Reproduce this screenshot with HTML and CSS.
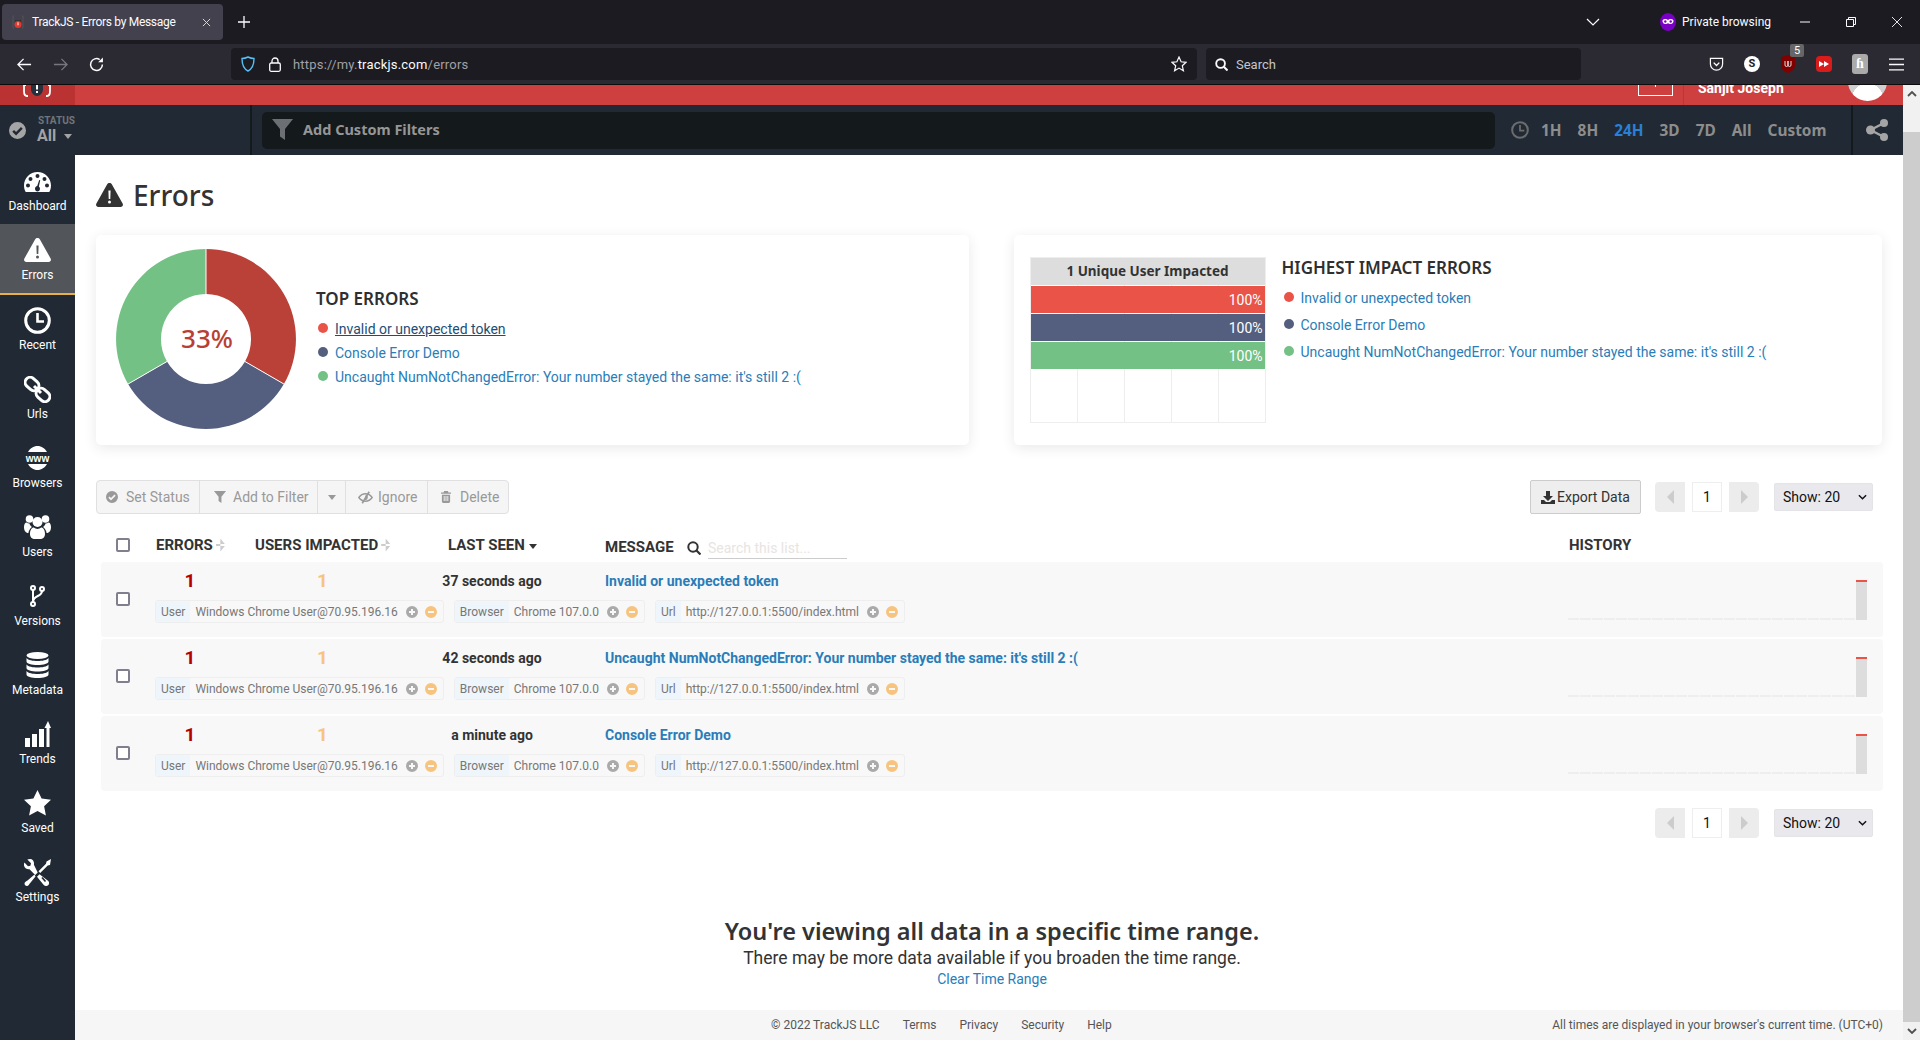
FILE: index.html
```html
<!DOCTYPE html>
<html lang="en">
<head>
<meta charset="utf-8">
<title>TrackJS - Errors by Message</title>
<link rel="stylesheet" href="styles.css">
</head>
<body>
<svg class="sprite" xmlns="http://www.w3.org/2000/svg">
  <symbol id="i-warn" viewBox="0 0 27 24"><path fill="currentColor" fill-rule="evenodd" d="M13.5 0c1 0 1.8.5 2.3 1.3l10.8 19.2c.9 1.6-.2 3.5-2 3.5H2.4c-1.8 0-2.9-1.9-2-3.5L11.2 1.300C11.700.5 12.500 0 13.500 0zM12.400 7.500l.3 8.500h1.600l.3-8.500zM13.500 17.500a1.500 1.500 0 1 0 0 3 1.500 1.500 0 0 0 0-3z"/></symbol>
  <symbol id="i-dash" viewBox="0 0 27 20"><path fill="currentColor" fill-rule="evenodd" d="M13.500 0C6 0 0 6 0 13.500c0 2.400.6 4.600 1.700 6.500h23.600c1.100-1.900 1.700-4.100 1.700-6.500C27 6 21 0 13.500 0zM13.500 2a2 2 0 1 1 0 4 2 2 0 0 1 0-4zM6.500 5a2 2 0 1 1 0 4 2 2 0 0 1 0-4zM20.500 5a2 2 0 1 1 0 4 2 2 0 0 1 0-4zM4 11.500a2 2 0 1 1 0 4 2 2 0 0 1 0-4zM23 11.500a2 2 0 1 1 0 4 2 2 0 0 1 0-4zM15.200 8l1 .3-1.300 6.200c.7.500 1.100 1.300 1.100 2.200 0 1.500-1.100 2.800-2.500 2.800S11 18.200 11 16.700c0-1.300 1-2.400 2.200-2.600z"/></symbol>
  <symbol id="i-clock" viewBox="0 0 27 27"><circle cx="13.500" cy="13.500" r="11.800" fill="none" stroke="currentColor" stroke-width="3"/><path d="M13.500 6v8.500h6.500" fill="none" stroke="currentColor" stroke-width="2.600"/></symbol>
  <symbol id="i-link" viewBox="0 0 27 27"><g fill="none" stroke="currentColor" stroke-width="3"><rect x="-7.500" y="-5" width="15" height="10" rx="5" transform="translate(8 8) rotate(42)"/><rect x="-7.500" y="-5" width="15" height="10" rx="5" transform="translate(19 19) rotate(42)"/></g><path d="M10 10l7 7" stroke="currentColor" stroke-width="3"/></symbol>
  <symbol id="i-www" viewBox="0 0 27 24"><path fill="currentColor" d="M4 6C6 2.500 9.500 0 13.500 0S21 2.500 23 6zM4 18h19c-2 3.500-5.500 6-9.500 6S6 21.500 4 18z"/><text x="13.500" y="15.500" text-anchor="middle" class="www">www</text></symbol>
  <symbol id="i-users" viewBox="0 0 27 24"><g fill="currentColor"><circle cx="13.500" cy="7" r="5"/><circle cx="5.500" cy="4" r="3.800"/><circle cx="21.500" cy="4" r="3.800"/><path d="M6 19c0-4 1.800-6.500 3.800-6.500 1 .9 2.300 1.400 3.700 1.400s2.700-.5 3.700-1.400c2 0 3.800 2.500 3.800 6.500 0 3-2 5-5 5h-5c-3 0-5-2-5-5z"/><path d="M0 12c0-2.500 1.200-4.500 2.500-4.500 .8.600 1.800 1 3 1 .4 1.700 1.300 2.700 2.400 3.500C6 13.500 4.700 15.500 4.400 18 1.500 18 0 15.500 0 12zM27 12c0-2.500-1.200-4.500-2.500-4.500-.8.600-1.800 1-3 1-.4 1.700-1.300 2.700-2.400 3.500 1.900 1.500 3.200 3.500 3.500 6 2.900 0 4.400-2.500 4.400-6z"/></g></symbol>
  <symbol id="i-fork" viewBox="0 0 15 22"><g fill="none" stroke="currentColor" stroke-width="2"><circle cx="3" cy="3" r="2"/><circle cx="3" cy="19" r="2"/><circle cx="12" cy="4" r="2"/><path d="M3 5v12M12 6c0 6-9 4-9 11"/></g></symbol>
  <symbol id="i-db" viewBox="0 0 23 30" preserveAspectRatio="none"><g fill="currentColor"><ellipse cx="11.500" cy="4" rx="11" ry="4"/><path d="M.5 7C2 9.500 7 10.500 11.500 10.500S21 9.500 22.500 7v4c0 2.300-5 4-11 4S.5 13.300.5 11z"/><path d="M.5 14.500C2 17 7 18 11.500 18s9.500-1 11-3.500v4c0 2.300-5 4-11 4s-11-1.700-11-4z"/><path d="M.5 22C2 24.500 7 25.500 11.500 25.500s9.500-1 11-3.500v4c0 2.300-5 4-11 4s-11-1.700-11-4z"/></g></symbol>
  <symbol id="i-trend" viewBox="0 0 26 26"><g fill="currentColor"><rect x="0" y="17" width="5" height="9"/><rect x="7" y="13" width="5" height="13"/><rect x="14" y="8" width="5" height="18"/><path d="M19.500 7L23 0l3 7h-1.500v19h-3V7z"/></g></symbol>
  <symbol id="i-star" viewBox="0 0 27 26"><polygon fill="currentColor" points="13.500,0 17.600,8.600 27,9.800 20.100,16.300 21.900,25.600 13.500,21 5.100,25.600 6.900,16.300 0,9.800 9.400,8.600"/></symbol>
  <symbol id="i-tools" viewBox="0 0 27 27"><g fill="currentColor"><path d="M6 0C5 0 4 .2 3.300.6L7 4.300 6.400 6.700 4 7.300.4 3.600C0 4.500-.1 5.500 0 6.500.4 9 2.800 10.700 5.500 10.300l5.700 5.700 2.500-2.500L9.900 5.700C10.500 2.800 8.800 0 6 0z"/><path d="M27 0l-4.500 2.500-.5 2.300-7.500 7.500 1.700 1.700 7.500-7.500 2.300-.5zM10.500 15.500L3.500 21.500c-1 .8-3 1.500-3 3 0 1.500 1 2.500 2.500 2.500s2.200-1.800 3-2.800l5.500-6.700z"/><path d="M15.500 15.200l-2.500 2.500 6.300 7.800c1 1.500 3 2 4.500 1s1.700-3.200.5-4.500z"/></g><path d="M18 18.500l3.500 4" stroke="#212a34" stroke-width="1.600"/></symbol>
  <symbol id="i-check" viewBox="0 0 18 18"><path fill="currentColor" fill-rule="evenodd" d="M9 0a9 9 0 1 1 0 18A9 9 0 0 1 9 0zM7.500 14.200l7-7-1.800-1.800-5.200 5.200-2.200-2.200-1.800 1.800z"/></symbol>
  <symbol id="i-funnel" viewBox="0 0 21 21"><path fill="currentColor" d="M0 0h21l-8 10v11l-5-3.500V10z"/></symbol>
  <symbol id="i-share" viewBox="0 0 22 22"><g fill="currentColor"><circle cx="18" cy="4" r="4"/><circle cx="4.500" cy="11" r="4.500"/><circle cx="18" cy="18" r="4"/></g><path d="M18 4L4.500 11 18 18" fill="none" stroke="currentColor" stroke-width="2.400"/></symbol>
  <symbol id="i-eye" viewBox="0 0 16 14"><path fill="none" stroke="currentColor" stroke-width="1.500" d="M.8 7C3 4 5.500 3 8 3s5 1 7.200 4C13 10 10.500 11 8 11S3 10 .8 7z"/><path fill="currentColor" d="M8 4.500a2.500 2.500 0 1 1-1 4.800z"/><path stroke="currentColor" stroke-width="1.800" d="M12 .8L4.500 13.200"/></symbol>
  <symbol id="i-trash" viewBox="0 0 11 13"><path fill="currentColor" fill-rule="evenodd" d="M3.500 0h4l.7 1.500H11V3H0V1.500h2.800zM1 4h9v7.500c0 .8-.7 1.500-1.500 1.500h-6C1.700 13 1 12.300 1 11.500zM3 5.500V11h1V5.500zM5 5.500V11h1V5.500zM7 5.500V11h1V5.500z"/></symbol>
  <symbol id="i-search" viewBox="0 0 14 14"><circle cx="6" cy="6" r="4.700" fill="none" stroke="currentColor" stroke-width="2"/><path d="M9.500 9.500L13.500 13.500" stroke="currentColor" stroke-width="2.200"/></symbol>
  <symbol id="i-down" viewBox="0 0 14 13"><path fill="currentColor" d="M5 0h4v5h3L7 10 2 5h3zM0 9h3l2 2h4l2-2h3v4H0z"/></symbol>
  <symbol id="i-plus" viewBox="0 0 12 12"><path fill="currentColor" fill-rule="evenodd" d="M6 0a6 6 0 1 1 0 12A6 6 0 0 1 6 0zM5 3v2H3v2h2v2h2V7h2V5H7V3z"/></symbol>
  <symbol id="i-minus" viewBox="0 0 12 12"><path fill="currentColor" fill-rule="evenodd" d="M6 0a6 6 0 1 1 0 12A6 6 0 0 1 6 0zM3 5v2h6V5z"/></symbol>
  <symbol id="i-chev" viewBox="0 0 10 6"><path d="M1 1l4 4 4-4" fill="none" stroke="currentColor" stroke-width="1.600"/></symbol>
</svg>

<header class="browser">
  <div class="tabstrip">
    <div class="tab">
      <svg class="favicon" viewBox="0 0 12 14"><path d="M2 1H1v12h1M10 1h1v12h-1" fill="none" stroke="#555" stroke-width="1"/><path d="M3 5h6v4H3z" fill="#333"/><circle cx="6" cy="9.500" r="3.500" fill="#e03a2e"/><rect x="5.500" y="7.300" width="1" height="3" fill="#fff"/></svg>
      <span class="tab-title">TrackJS - Errors by Message</span>
      <svg class="tab-x" viewBox="0 0 10 10"><path d="M1 1l8 8M9 1l-8 8" stroke="#d8d8da" stroke-width="1.100"/></svg>
    </div>
    <svg class="newtab" viewBox="0 0 12 12"><path d="M6 0v12M0 6h12" stroke="#fbfbfe" stroke-width="1.300"/></svg>
    <svg class="tab-list" viewBox="0 0 14 8"><path d="M1 1l6 6 6-6" fill="none" stroke="#fbfbfe" stroke-width="1.200"/></svg>
    <svg class="private-icon" viewBox="0 0 16 18"><ellipse cx="8" cy="9" rx="8" ry="9" fill="#7b00c6"/><path d="M2.500 8c0-1.500 1.500-2 3-2 1 0 2 .5 2.500 1 .5-.5 1.500-1 2.500-1 1.500 0 3 .5 3 2s-1 3-2.700 3c-1.300 0-2-.8-2.800-.8s-1.500.8-2.800.8C3.500 11 2.500 9.500 2.500 8z" fill="#fff"/><circle cx="5.300" cy="8.500" r="1.200" fill="#7b00c6"/><circle cx="10.700" cy="8.500" r="1.200" fill="#7b00c6"/></svg>
    <span class="private-label">Private browsing</span>
    <div class="winbtn"><svg viewBox="0 0 10 10"><path d="M0 5h10" stroke="#fbfbfe"/></svg></div>
    <div class="winbtn"><svg viewBox="0 0 10 10"><path d="M.5 2.500h7v7h-7zM2.500 2.500v-2h7v7h-2" fill="none" stroke="#fbfbfe"/></svg></div>
    <div class="winbtn"><svg viewBox="0 0 10 10"><path d="M0 0l10 10M10 0L0 10" stroke="#fbfbfe" stroke-width=".9"/></svg></div>
  </div>
  <div class="navbar">
    <div class="navbtn"><svg viewBox="0 0 16 14"><path d="M7 1L1 7l6 6M1 7h14" fill="none" stroke="#fbfbfe" stroke-width="1.400"/></svg></div>
    <div class="navbtn"><svg viewBox="0 0 16 14"><path d="M9 1l6 6-6 6M15 7H1" fill="none" stroke="#77767d" stroke-width="1.400"/></svg></div>
    <div class="navbtn"><svg viewBox="0 0 14 14"><path d="M12.500 7A5.500 5.500 0 1 1 10 2.400" fill="none" stroke="#fbfbfe" stroke-width="1.400"/><path d="M13 .5v4.500H8.500z" fill="#fbfbfe"/></svg></div>
    <div class="urlbar">
      <svg class="shield" viewBox="0 0 14 16"><path d="M7 1c2 1 3.500 1.500 6 1.500C13 9 11 13 7 15 3 13 1 9 1 2.500 3.500 2.500 5 2 7 1z" fill="none" stroke="#54c0f5" stroke-width="1.400"/></svg>
      <svg class="lock" viewBox="0 0 12 15"><path d="M3 6V4a3 3 0 0 1 6 0v2" fill="none" stroke="#fbfbfe" stroke-width="1.300"/><rect x=".7" y="6" width="10.600" height="8.300" rx="1.500" fill="none" stroke="#fbfbfe" stroke-width="1.300"/></svg>
      <span class="url">https://my.<b>trackjs.com</b>/errors</span>
      <svg class="bookmark" viewBox="0 0 16 16"><polygon points="8,1 10.100,5.800 15,6.300 11.300,9.700 12.400,14.700 8,12.100 3.600,14.700 4.700,9.700 1,6.300 5.900,5.800" fill="none" stroke="#fbfbfe" stroke-width="1.200"/></svg>
    </div>
    <div class="searchbar">
      <svg class="sb-icon"><use href="#i-search"/></svg>
      <span>Search</span>
    </div>
    <div class="ext-row">
      <div class="navbtn"><svg viewBox="0 0 16 16"><path d="M1.500 1.500h13v6a6.500 6.500 0 0 1-13 0z" fill="none" stroke="#fbfbfe" stroke-width="1.300"/><path d="M5 6l3 3 3-3" fill="none" stroke="#fbfbfe" stroke-width="1.500"/></svg></div>
      <div class="navbtn"><span class="ext-s">S</span></div>
      <div class="navbtn ext-ub"><svg viewBox="0 0 14 18"><path d="M7 0l7 2v8c0 4-3 6.500-7 8-4-1.500-7-4-7-8V2z" fill="#800000"/><path d="M4 6v4a1.500 1.500 0 0 0 3 0V6M7 6v4a1.500 1.500 0 0 0 3 0V6" fill="none" stroke="#ddd" stroke-width="1"/></svg><span class="badge">5</span></div>
      <div class="navbtn"><span class="ext-red"><svg viewBox="0 0 10 6"><path d="M0 0l5 3-5 3zM5 0l5 3-5 3z" fill="#fff"/></svg></span></div>
      <div class="navbtn"><span class="ext-h">ɦ</span></div>
      <div class="navbtn"><svg viewBox="0 0 14 12"><path d="M0 1h14M0 6h14M0 11h14" stroke="#fbfbfe" stroke-width="1.300"/></svg></div>
    </div>
  </div>
</header>

<div class="viewport">
  <div class="page">
    <div class="redbar">
      <div class="logo">
        <svg viewBox="0 0 30 12"><path d="M4 0L2 .0V6c0 3 1 5 3 5h1M26 0h2v6c0 3-1 5-3 5h-1" fill="none" stroke="#fff" stroke-width="1.800"/><path d="M9 0h12v4c0 4-3 7-6 7s-6-3-6-7z" fill="#27303c"/><rect x="14" y="0" width="2" height="4.500" fill="#fff"/><rect x="14" y="6" width="2" height="2" fill="#fff"/></svg>
      </div>
      <div class="notif"><i></i></div>
      <div class="user-sep"></div>
      <div class="user-name">Sanjit Joseph</div>
      <div class="avatar"></div>
    </div>
    <div class="subbar">
      <div class="status">
        <svg class="status-icon"><use href="#i-check"/></svg>
        <div class="status-text">
          <span class="status-label">STATUS</span>
          <span class="status-value">All <i class="caret"></i></span>
        </div>
      </div>
      <div class="filterbox">
        <svg class="filter-icon"><use href="#i-funnel"/></svg>
        <span>Add Custom Filters</span>
      </div>
      <svg class="range-clock"><use href="#i-clock"/></svg>
      <nav class="ranges">
        <span>1H</span><span>8H</span><span class="on">24H</span><span>3D</span><span>7D</span><span>All</span><span>Custom</span>
      </nav>
      <div class="sharebox"><svg><use href="#i-share"/></svg></div>
    </div>
    <div class="content">
      <aside class="sidebar">
        <a class="nav"><svg class="ico w27 h20"><use href="#i-dash"/></svg>Dashboard</a>
        <a class="nav active"><svg class="ico w27 h24"><use href="#i-warn"/></svg>Errors</a>
        <a class="nav"><svg class="ico w27 h27"><use href="#i-clock"/></svg>Recent</a>
        <a class="nav"><svg class="ico w27 h27"><use href="#i-link"/></svg>Urls</a>
        <a class="nav"><svg class="ico w27 h24"><use href="#i-www"/></svg>Browsers</a>
        <a class="nav"><svg class="ico w27 h24"><use href="#i-users"/></svg>Users</a>
        <a class="nav"><svg class="ico w15 h22"><use href="#i-fork"/></svg>Versions</a>
        <a class="nav"><svg class="ico w23 h26"><use href="#i-db"/></svg>Metadata</a>
        <a class="nav"><svg class="ico w26 h26"><use href="#i-trend"/></svg>Trends</a>
        <a class="nav"><svg class="ico w27 h26"><use href="#i-star"/></svg>Saved</a>
        <a class="nav"><svg class="ico w27 h27"><use href="#i-tools"/></svg>Settings</a>
      </aside>
      <main class="main">
        <div class="inner">
          <h1 class="title"><svg><use href="#i-warn"/></svg>Errors</h1>
          <section class="cards">
            <div class="card card-top">
              <svg class="donut" viewBox="0 0 180 180">
                <path fill="#b94137" d="M90 0A90 90 0 0 1 167.900 135L129 112.500A45 45 0 0 0 90 45z"/>
                <path fill="#545f7f" d="M167.900 135A90 90 0 0 1 12.100 135L51 112.500A45 45 0 0 0 129 112.500z"/>
                <path fill="#74c186" d="M12.100 135A90 90 0 0 1 90 0V45A45 45 0 0 0 51 112.500z"/>
                <path d="M90 0V45M167.900 135L129 112.500M12.100 135L51 112.500" stroke="#fff" stroke-width="1"/>
                <text x="91" y="99" text-anchor="middle" class="donut-label">33%</text>
              </svg>
              <div class="legend legend-top">
                <h2>TOP ERRORS</h2>
                <div class="leg"><i class="dot red"></i><a class="hover">Invalid or unexpected token</a></div>
                <div class="leg"><i class="dot navy"></i><a>Console Error Demo</a></div>
                <div class="leg"><i class="dot green"></i><a>Uncaught NumNotChangedError: Your number stayed the same: it's still 2 :(</a></div>
              </div>
            </div>
            <div class="card card-impact">
              <div class="chart">
                <div class="chart-head">1 Unique User Impacted</div>
                <div class="chart-body">
                  <div class="bar red">100%</div>
                  <div class="bar navy">100%</div>
                  <div class="bar green">100%</div>
                </div>
              </div>
              <div class="legend legend-impact">
                <h2>HIGHEST IMPACT ERRORS</h2>
                <div class="leg"><i class="dot red"></i><a>Invalid or unexpected token</a></div>
                <div class="leg"><i class="dot navy"></i><a>Console Error Demo</a></div>
                <div class="leg"><i class="dot green"></i><a>Uncaught NumNotChangedError: Your number stayed the same: it's still 2 :(</a></div>
              </div>
            </div>
          </section>

          <div class="toolbar">
            <div class="btn-group">
              <span class="seg s1"><svg><use href="#i-check"/></svg>Set Status</span>
              <span class="seg s2"><svg><use href="#i-funnel"/></svg>Add to Filter</span>
              <span class="seg s3"><i class="caret"></i></span>
              <span class="seg s4"><svg><use href="#i-eye"/></svg>Ignore</span>
              <span class="seg s5"><svg><use href="#i-trash"/></svg>Delete</span>
            </div>
            <div class="tools-right">
              <span class="export"><svg><use href="#i-down"/></svg>Export Data</span>
              <div class="pager">
                <span class="pg prev"><i></i></span><span class="pg num">1</span><span class="pg next"><i></i></span>
              </div>
              <span class="show">Show: 20<svg><use href="#i-chev"/></svg></span>
            </div>
          </div>

          <div class="thead">
            <span class="cb"></span>
            <span class="th th-err">ERRORS<i class="sort"></i></span>
            <span class="th th-usr">USERS IMPACTED<i class="sort"></i></span>
            <span class="th th-seen">LAST SEEN<i class="caret dark"></i></span>
            <span class="th th-msg">MESSAGE</span>
            <svg class="th-search"><use href="#i-search"/></svg>
            <span class="th-input">Search this list...</span>
            <span class="th th-hist">HISTORY</span>
          </div>

          <div class="rows">
            <article class="row">
              <span class="cb"></span>
              <div class="row-main">
                <div class="row-top">
                  <span class="n-err">1</span><span class="n-usr">1</span><span class="seen">37 seconds ago</span><a class="msg">Invalid or unexpected token</a>
                </div>
                <div class="tags">
                  <div class="tag"><b>User</b><span>Windows Chrome User@70.95.196.16</span><svg class="p"><use href="#i-plus"/></svg><svg class="m"><use href="#i-minus"/></svg></div>
                  <div class="tag"><b>Browser</b><span>Chrome 107.0.0</span><svg class="p"><use href="#i-plus"/></svg><svg class="m"><use href="#i-minus"/></svg></div>
                  <div class="tag"><b>Url</b><span>http://127.0.0.1:5500/index.html</span><svg class="p"><use href="#i-plus"/></svg><svg class="m"><use href="#i-minus"/></svg></div>
                </div>
              </div>
              <svg class="spark" viewBox="0 0 299 40"><path d="M0 39H287" stroke="#e4e4e4" stroke-dasharray="11 1"/><rect x="288" y="0" width="11" height="40" fill="#ddd"/><rect x="288" y="0" width="11" height="2" fill="#ea5448"/></svg>
            </article>
            <article class="row">
              <span class="cb"></span>
              <div class="row-main">
                <div class="row-top">
                  <span class="n-err">1</span><span class="n-usr">1</span><span class="seen">42 seconds ago</span><a class="msg">Uncaught NumNotChangedError: Your number stayed the same: it's still 2 :(</a>
                </div>
                <div class="tags">
                  <div class="tag"><b>User</b><span>Windows Chrome User@70.95.196.16</span><svg class="p"><use href="#i-plus"/></svg><svg class="m"><use href="#i-minus"/></svg></div>
                  <div class="tag"><b>Browser</b><span>Chrome 107.0.0</span><svg class="p"><use href="#i-plus"/></svg><svg class="m"><use href="#i-minus"/></svg></div>
                  <div class="tag"><b>Url</b><span>http://127.0.0.1:5500/index.html</span><svg class="p"><use href="#i-plus"/></svg><svg class="m"><use href="#i-minus"/></svg></div>
                </div>
              </div>
              <svg class="spark" viewBox="0 0 299 40"><path d="M0 39H287" stroke="#e4e4e4" stroke-dasharray="11 1"/><rect x="288" y="0" width="11" height="40" fill="#ddd"/><rect x="288" y="0" width="11" height="2" fill="#ea5448"/></svg>
            </article>
            <article class="row">
              <span class="cb"></span>
              <div class="row-main">
                <div class="row-top">
                  <span class="n-err">1</span><span class="n-usr">1</span><span class="seen">a minute ago</span><a class="msg">Console Error Demo</a>
                </div>
                <div class="tags">
                  <div class="tag"><b>User</b><span>Windows Chrome User@70.95.196.16</span><svg class="p"><use href="#i-plus"/></svg><svg class="m"><use href="#i-minus"/></svg></div>
                  <div class="tag"><b>Browser</b><span>Chrome 107.0.0</span><svg class="p"><use href="#i-plus"/></svg><svg class="m"><use href="#i-minus"/></svg></div>
                  <div class="tag"><b>Url</b><span>http://127.0.0.1:5500/index.html</span><svg class="p"><use href="#i-plus"/></svg><svg class="m"><use href="#i-minus"/></svg></div>
                </div>
              </div>
              <svg class="spark" viewBox="0 0 299 40"><path d="M0 39H287" stroke="#e4e4e4" stroke-dasharray="11 1"/><rect x="288" y="0" width="11" height="40" fill="#ddd"/><rect x="288" y="0" width="11" height="2" fill="#ea5448"/></svg>
            </article>
          </div>

          <div class="bottom-pager tools-right">
            <div class="pager">
              <span class="pg prev"><i></i></span><span class="pg num">1</span><span class="pg next"><i></i></span>
            </div>
            <span class="show">Show: 20<svg><use href="#i-chev"/></svg></span>
          </div>

          <div class="notice">
            <h3>You're viewing all data in a specific time range.</h3>
            <p>There may be more data available if you broaden the time range.</p>
            <a>Clear Time Range</a>
          </div>
        </div>
        <footer class="footer">
          <span>© 2022 TrackJS LLC</span><span>Terms</span><span>Privacy</span><span>Security</span><span>Help</span>
          <span class="tz">All times are displayed in your browser's current time. (UTC+0)</span>
        </footer>
      </main>
    </div>
  </div>
  <div class="scrollbar">
    <div class="sb-arrow"><svg viewBox="0 0 10 6"><path d="M1 5l4-4 4 4" fill="none" stroke="#505050" stroke-width="1.800"/></svg></div>
    <div class="sb-thumb"></div>
    <div class="sb-arrow"><svg viewBox="0 0 10 6"><path d="M1 1l4 4 4-4" fill="none" stroke="#505050" stroke-width="1.800"/></svg></div>
  </div>
</div>
</body>
</html>
```

FILE: styles.css
```css
* { box-sizing: border-box; }
html, body { margin: 0; padding: 0; height: 100%; overflow: hidden; }
body { width: 1920px; height: 1040px; display: flex; flex-direction: column; background: #fff; font-family: Roboto, "Liberation Sans", sans-serif; font-size: 14px; color: #333; }
.sprite { display: none; }
svg { display: block; flex: none; }
a { color: #2a7db8; }
h1, h2, h3, p { margin: 0; }

/* browser chrome */
.browser { flex: none; height: 85px; background: #2b2a33; border-bottom: 1px solid #0c0c0d; color: #fbfbfe; }
.tabstrip { height: 44px; background: #1c1b22; display: flex; align-items: center; }
.tab { width: 221px; height: 36px; margin-left: 2px; background: #42414d; border-radius: 4px; display: flex; align-items: center; padding-left: 10px; }
.favicon { width: 12px; height: 14px; }
.tab-title { margin-left: 8px; font-size: 12px; letter-spacing: -0.3px; width: 170px; white-space: nowrap; }
.tab-x { width: 9px; height: 9px; }
.newtab { width: 12px; height: 12px; margin-left: 15px; }
.tab-list { width: 14px; height: 8px; margin-left: auto; margin-right: 60px; }
.private-icon { width: 16px; height: 18px; }
.private-label { font-size: 12px; margin-left: 6px; width: 88px; margin-right: 12px; white-space: nowrap; }
.winbtn { width: 46px; height: 44px; display: flex; align-items: center; justify-content: center; }
.winbtn svg { width: 10px; height: 10px; }
.navbar { height: 40px; display: flex; align-items: center; padding: 0 6px; }
.navbtn { position: relative; width: 36px; height: 32px; display: flex; align-items: center; justify-content: center; }
.navbtn > svg { width: 15px; height: 15px; }
.urlbar { margin-left: 117px; width: 966px; height: 32px; background: #1c1b22; border-radius: 4px; display: flex; align-items: center; padding: 0 10px; }
.shield { width: 14px; height: 16px; }
.lock { width: 12px; height: 15px; margin-left: 14px; }
.url { margin-left: 12px; font-size: 13px; color: #a0a0a6; letter-spacing: 0.2px; white-space: nowrap; }
.url b { font-weight: 400; color: #fbfbfe; }
.bookmark { width: 16px; height: 16px; margin-left: auto; }
.searchbar { margin-left: 9px; width: 375px; height: 32px; background: #1c1b22; border-radius: 4px; display: flex; align-items: center; padding-left: 9px; font-size: 13px; color: #c6c6ca; }
.sb-icon { width: 13px; height: 13px; margin-right: 8px; color: #fbfbfe; }
.ext-row { margin-left: auto; display: flex; }
.ext-s { width: 16px; height: 16px; border-radius: 50%; background: #fff; color: #222; font: 700 11px/16px Roboto, sans-serif; text-align: center; }
.ext-ub > svg { width: 14px; height: 18px; }
.badge { position: absolute; left: 20px; top: -4px; width: 14px; height: 13px; background: #666; color: #fff; border-radius: 2px; font: 400 11px/13px Roboto, sans-serif; text-align: center; }
.ext-red { width: 16px; height: 16px; border-radius: 4px; background: #d81b1b; display: flex; align-items: center; justify-content: center; }
.ext-red svg { width: 10px; height: 6px; }
.ext-h { width: 16px; height: 20px; border-radius: 3px; background: #aaa; color: #fff; font: 700 14px/20px "Liberation Serif", serif; text-align: center; }

/* viewport */
.viewport { flex: 1; min-height: 0; display: flex; }
.page { flex: 1; min-width: 0; display: flex; flex-direction: column; }
.scrollbar { flex: none; width: 17px; background: #f1f1f1; display: flex; flex-direction: column; }
.sb-arrow { height: 18px; display: flex; align-items: center; justify-content: center; }
.sb-arrow svg { width: 10px; height: 6px; }
.sb-thumb { flex: 1; margin-top: 29px; background: #cdcdcd; }

/* app header */
.redbar { flex: none; height: 20px; background: #ce3f3f; display: flex; overflow: hidden; }
.logo { width: 75px; background: #ba3232; padding-left: 22px; }
.logo svg { width: 30px; height: 12px; }
.notif { position: relative; width: 35px; height: 11px; margin-left: 1563px; border: 1px solid #fff; border-top: 0; }
.notif i { position: absolute; left: 16px; top: 0; width: 1px; height: 2px; background: #fff; }
.user-sep { width: 1px; height: 20px; margin-left: 10px; background: #bd3636; }
.user-name { width: 89px; margin-left: 14px; margin-top: -4px; font: 700 14px/14px Roboto, sans-serif; color: #fff; white-space: nowrap; }
.avatar { width: 39px; height: 39px; margin-left: 61px; margin-top: -23px; border-radius: 50%; background: radial-gradient(ellipse 42% 46% at 50% 100%, #fff 98%, #cfcfcf 100%); }
.subbar { flex: none; height: 50px; background: #212a34; display: flex; align-items: center; }
.status { width: 252px; height: 50px; border-right: 2px solid #14191c; display: flex; align-items: center; padding-left: 9px; }
.status-icon { width: 17px; height: 17px; color: #a5a5a5; }
.status-text { margin-left: 12px; display: flex; flex-direction: column; }
.status-label { font-size: 10px; font-weight: 700; color: #6f757b; line-height: 13px; margin-top: -2px; }
.status-value { font-size: 16px; font-weight: 700; color: #a3a3a3; line-height: 18px; margin-left: -1px; }
.caret { display: inline-block; width: 0; height: 0; border: 4px solid transparent; border-top: 5px solid currentColor; border-bottom: 0; vertical-align: middle; margin-left: 3px; }
.status-value .caret { margin-left: 4px; }
.filterbox { margin-left: 10px; width: 1233px; height: 37px; background: #14191c; border-radius: 5px; display: flex; align-items: center; padding-left: 10px; padding-bottom: 2px; font-family: "Noto Sans", sans-serif; font-weight: 700; font-size: 14.500px; color: #969696; }
.filter-icon { width: 21px; height: 21px; color: #6c7074; margin-right: 10px; }
.range-clock { width: 18px; height: 18px; margin-left: 16px; color: #6c6c6c; }
.ranges { display: flex; gap: 16px; margin-left: 12px; font-family: "Noto Sans", sans-serif; font-size: 15.400px; font-weight: 700; color: #8d8d8d; }
.ranges .on { color: #2a7fd6; }
.sharebox { width: 52px; height: 50px; border-left: 2px solid #14191c; display: flex; align-items: center; justify-content: center; margin-left: auto; color: #a5a5a5; padding-right: 2px; }
.sharebox svg { width: 22px; height: 22px; }

/* sidebar */
.content { flex: 1; min-height: 0; display: flex; }
.sidebar { flex: none; width: 75px; background: #212a34; display: flex; flex-direction: column; }
.nav { height: 69px; padding-top: 13px; display: flex; flex-direction: column; align-items: center; color: #fff; font-size: 12px; font-weight: 400; line-height: 16px; }
.nav.active { height: 71px; margin-bottom: -1px; background: #52565b; border-bottom: 2px solid #e8b04a; }
.ico { color: #fff; }
.ico.w27 { width: 27px; } .ico.w15 { width: 15px; } .ico.w23 { width: 23px; } .ico.w26 { width: 26px; }
.ico.h20 { height: 20px; margin-top: 4px; margin-bottom: 6px; }
.ico.h24 { height: 24px; margin-top: 1px; margin-bottom: 5px; }
.ico.h22 { height: 22px; margin-top: 2px; margin-bottom: 6px; }
.ico.h26 { height: 26px; margin-top: 0; margin-bottom: 4px; }
.ico.h27 { height: 27px; margin-top: 0; margin-bottom: 3px; }
.www { font: 700 10px "Liberation Sans", sans-serif; fill: #fff; }

/* main */
.main { flex: 1; min-width: 0; display: flex; flex-direction: column; background: #fff; }
.inner { flex: 1; min-height: 0; padding: 0 21px; display: flex; flex-direction: column; }
.title { height: 80px; display: flex; align-items: center; font-family: "Noto Sans", sans-serif; font-size: 28px; font-weight: 500; color: #333; }
.title svg { width: 27px; height: 24px; margin-right: 10px; color: #333; }
.cards { display: flex; gap: 45px; }
.card { flex: 1; height: 210px; background: #fff; border-radius: 5px; box-shadow: 0 3px 14px rgba(0, 0, 0, .09); display: flex; }
.card-top { padding: 14px 0 0 20px; gap: 20px; }
.donut { width: 180px; height: 180px; }
.donut-label { font: 500 26px "Noto Sans", sans-serif; fill: #b83f35; }
.legend h2 { font-family: "Noto Sans", sans-serif; font-size: 17px; font-weight: 600; line-height: 24px; color: #2f2f2f; }
.legend-top { padding-top: 38px; }
.leg { display: flex; align-items: center; gap: 7px; height: 24px; padding-left: 2px; white-space: nowrap; }
.legend-top h2 { margin-bottom: 6px; }
.legend-impact { margin-top: -1px; }
.legend-impact h2 { margin-bottom: 4px; }
.legend-impact .leg { height: 27px; }
.dot { width: 10px; height: 10px; border-radius: 50%; flex: none; margin-top: -2px; }
.dot.red { background: #ea5448; } .dot.navy { background: #545f7f; } .dot.green { background: #74c186; }
.hover { color: #1d4f75; text-decoration: underline; }
.card-impact { padding: 22px 0 0 16px; gap: 16px; }
.chart { width: 236px; height: 166px; border: 1px solid #eee; }
.chart-head { height: 27px; background: #ddd; text-align: center; font-family: "Noto Sans", sans-serif; font-size: 13.500px; font-weight: 700; line-height: 27px; color: #333; }
.chart-body { height: 137px; padding-top: 1px; background-image: repeating-linear-gradient(90deg, transparent 0 46px, #eee 46px 47px); }
.bar { height: 27px; margin-bottom: 1px; text-align: right; padding-right: 2px; color: #fff; line-height: 28px; }
.bar.red { background: #ea5448; } .bar.navy { background: #545f7f; } .bar.green { background: #74c186; }

/* toolbar */
.toolbar { margin-top: 35px; height: 34px; display: flex; justify-content: space-between; padding-right: 9px; }
.btn-group { display: flex; height: 34px; background: #f5f5f5; border: 1px solid #e0e0e0; border-radius: 4px; color: #999; }
.seg { display: flex; align-items: center; height: 32px; border-right: 1px solid #e0e0e0; white-space: nowrap; }
.seg:last-child { border-right: 0; }
.seg svg { color: #999; }
.s1 { width: 103px; padding-left: 9px; } .s1 svg { width: 12px; height: 12px; margin-right: 8px; }
.s2 { width: 118px; padding-left: 14px; } .s2 svg { width: 12px; height: 12px; margin-right: 7px; }
.s3 { width: 28px; padding-left: 10px; } .s3 .caret { margin-left: 0; }
.s4 { width: 82px; padding-left: 12px; } .s4 svg { width: 15px; height: 13px; margin-right: 5px; }
.s5 { width: 80px; padding-left: 13px; } .s5 svg { width: 10px; height: 12px; margin-right: 9px; }
.tools-right { display: flex; align-items: center; }
.export { width: 111px; height: 34px; background: #eee; border: 1px solid #ccc; border-radius: 2px; display: flex; align-items: center; padding-left: 10px; color: #333; white-space: nowrap; }
.export svg { width: 14px; height: 13px; margin-right: 2px; }
.pager { margin-left: 14px; display: flex; gap: 7px; }
.pg { width: 30px; height: 30px; display: flex; align-items: center; justify-content: center; background: #ececec; }
.prev { border-radius: 4px 0 0 4px; } .next { border-radius: 0 4px 4px 0; }
.prev i { border: 7px solid transparent; border-left: 0; border-right-color: #ccc; }
.next i { border: 7px solid transparent; border-right: 0; border-left-color: #ccc; }
.num { background: #fff; border: 1px solid #eee; color: #111; }
.show { margin-left: 15px; width: 99px; height: 28px; background: #e9e9ed; border: 1px solid #e4e4e8; border-radius: 2px; display: flex; align-items: center; padding-left: 8px; color: #111; white-space: nowrap; }
.show svg { width: 9px; height: 6px; margin-left: auto; margin-right: 5px; color: #111; }

/* table */
.thead { margin-top: 24px; height: 24px; display: flex; align-items: flex-start; padding-left: 20px; }
.cb { flex: none; width: 14px; height: 14px; background: #fff; border: 2px solid #7f7f8d; border-radius: 2px; }
.row .cb { margin-top: -2px; }
.th { font-size: 15px; font-weight: 700; line-height: 14px; color: #333; white-space: nowrap; display: flex; align-items: center; }
.th-err { margin-left: 26px; width: 99px; }
.th-usr { width: 193px; }
.th-seen { width: 157px; }
.th-msg { margin-top: 2px; width: 82px; }
.th-search { width: 14px; height: 14px; margin-top: 3px; color: #333; }
.th-input { margin-left: 7px; width: 139px; height: 21px; border-bottom: 1px solid #ccc; color: #e8e4e2; line-height: 20px; white-space: nowrap; }
.th-hist { margin-left: 722px; }
.sort { width: 9px; height: 13px; margin-left: 3px; background: #ccc; clip-path: polygon(50% 0, 100% 42%, 0 42%, 0 58%, 100% 58%, 50% 100%); }
.caret.dark { color: #333; margin-left: 4px; margin-top: 3px; }
.rows { margin: 0 -1px 0 5px; display: flex; flex-direction: column; gap: 2px; }
.row { height: 75px; background: #f8f8f8; border-radius: 4px; display: flex; align-items: center; padding-left: 15px; }
.row-main { flex: 1; margin-left: 25px; align-self: flex-start; margin-top: 9px; }
.row-top { display: flex; height: 20px; line-height: 20px; align-items: center; }
.n-err { width: 70px; text-align: center; font-size: 19px; font-weight: 700; color: #b30000; }
.n-usr { width: 195px; text-align: center; font-size: 19px; font-weight: 700; color: #f7c47f; }
.seen { width: 144px; text-align: center; font-weight: 700; color: #333; }
.msg { margin-left: 41px; font-weight: 700; color: #2a7db8; }
.tags { display: flex; gap: 10px; margin-top: 9px; }
.tag { height: 23px; display: flex; align-items: center; border: 1px solid #eee; border-radius: 3px; font-size: 12px; color: #777; padding-right: 6px; white-space: nowrap; }
.tag b { font-weight: 400; height: 21px; line-height: 22px; padding: 0 5px; background: #eef5fb; }
.tag span { margin-left: 5px; }
.tag .p, .tag .m { width: 12px; height: 12px; }
.tag .p { margin-left: 8px; color: #aaa; }
.tag .m { margin-left: 7px; color: #f7c47f; }
.spark { width: 299px; height: 40px; margin-right: 16px; align-self: flex-start; margin-top: 18px; }

.bottom-pager { margin-top: 17px; height: 30px; justify-content: flex-end; padding-right: 9px; }
.notice { margin-top: 80px; padding-left: 6px; text-align: center; }
.notice h3 { font-family: "Noto Sans", sans-serif; font-size: 23.500px; font-weight: 600; line-height: 26px; color: #333; }
.notice p { margin: 2px 0 -1px; font-size: 17.500px; line-height: 24px; color: #333; }
.notice a { display: block; line-height: 20px; }
.footer { flex: none; height: 30px; background: #f6f6f6; display: flex; align-items: center; gap: 23px; padding: 0 20px 0 696px; font-size: 12px; color: #555; }
.tz { margin-left: auto; }
```
